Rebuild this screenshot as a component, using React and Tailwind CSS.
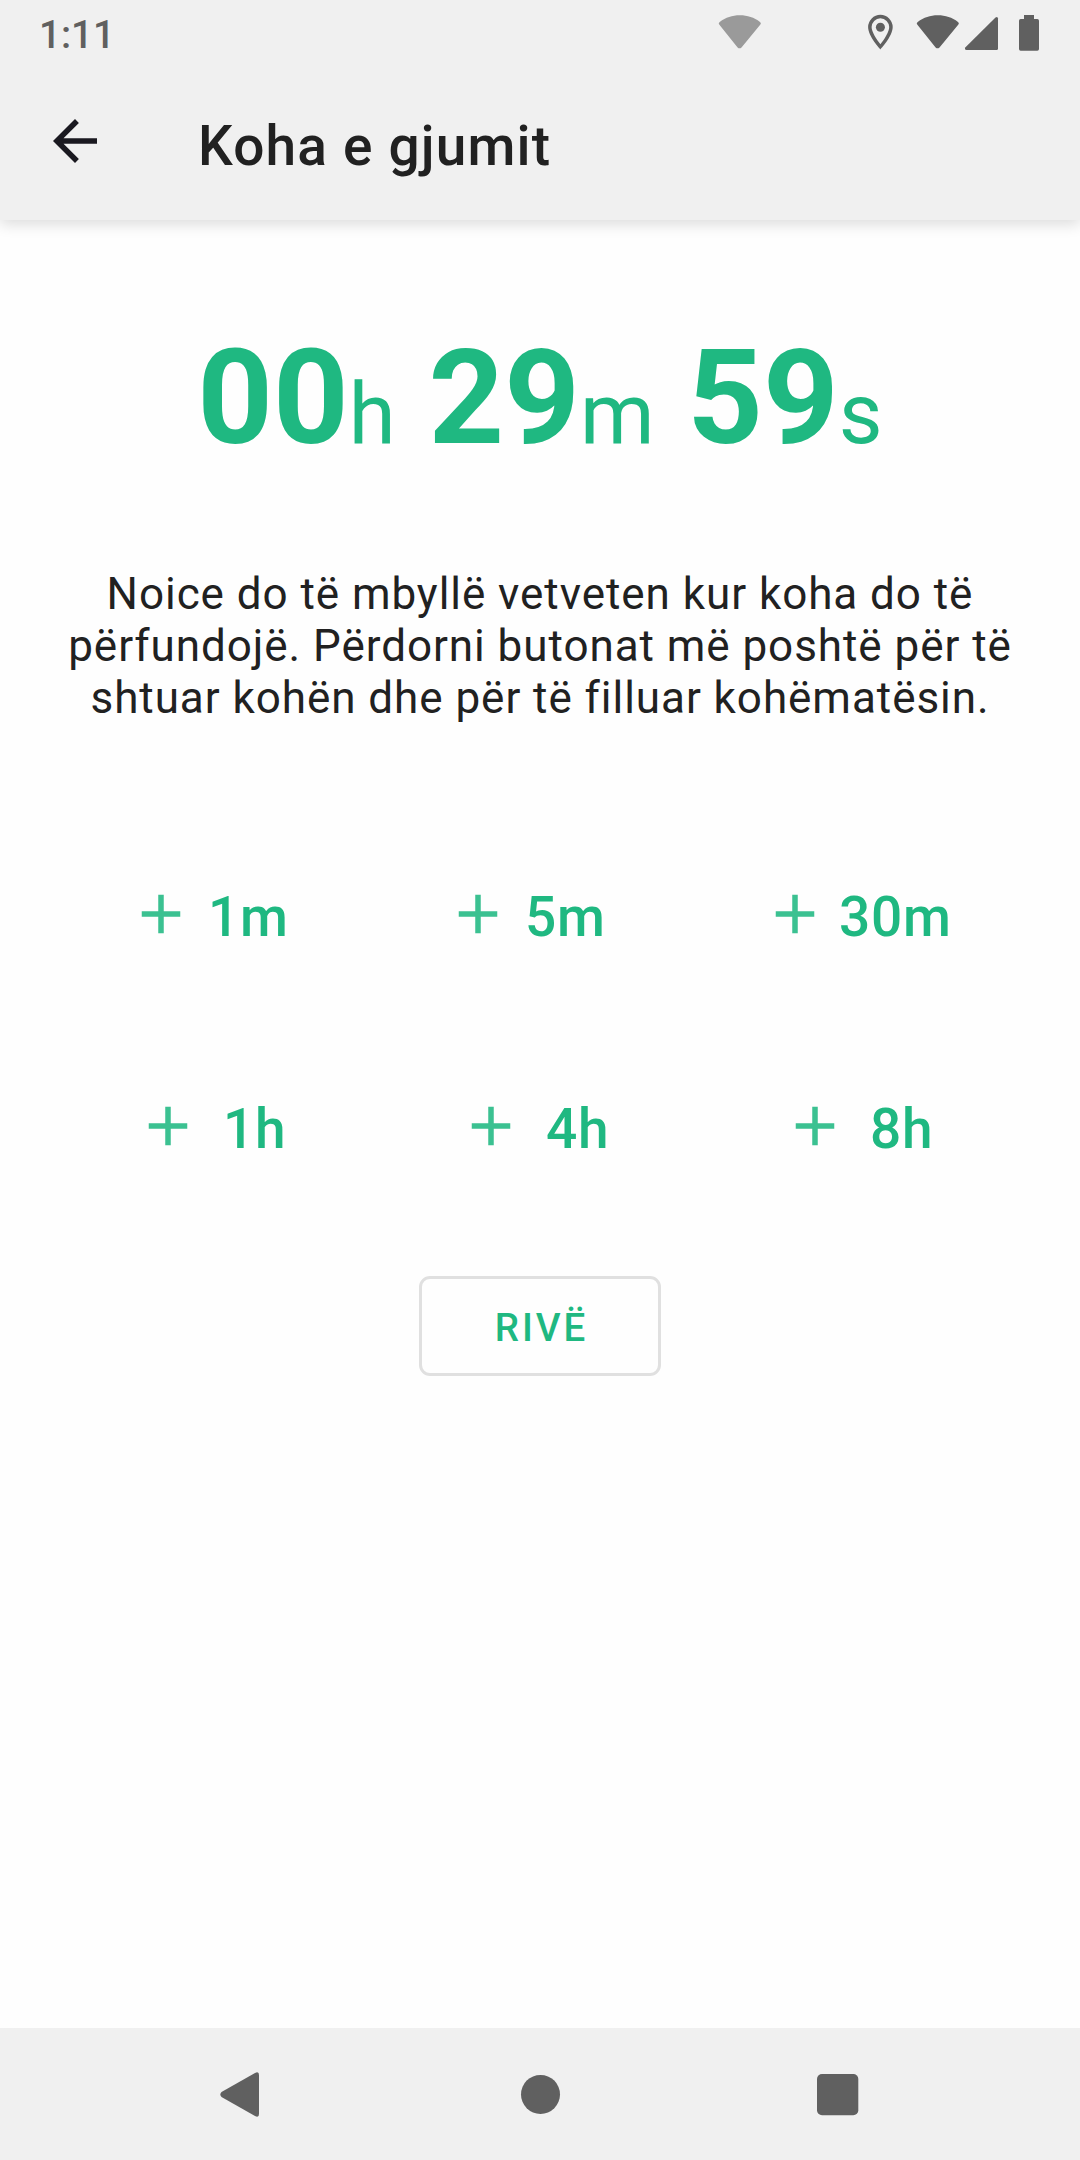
const rows = [
  {
    className: 'mt-[157px] pl-[128px]',
    items: [
      { label: '1m', cell: 'w-[317px]', gap: 'ml-[14px]' },
      { label: '5m', cell: 'w-[317px]', gap: 'ml-[14px]' },
      { label: '30m', cell: 'w-[317px]', gap: 'ml-[11px]' },
    ],
  },
  {
    className: 'mt-[146px] pl-[135px]',
    items: [
      { label: '1h', cell: 'w-[323px]', gap: 'ml-[22px]' },
      { label: '4h', cell: 'w-[324px]', gap: 'ml-[22px]' },
      { label: '8h', cell: 'w-[297px]', gap: 'ml-[22px]' },
    ],
  },
];

function AddButton({ label, cell, gap }) {
  return (
    <div className={cell}>
      <button className="flex h-[66px] items-start text-[#1fb881]">
        <svg className="size-[66px] opacity-[0.87]" viewBox="0 0 24 24" fill="currentColor">
          <path d="M19 13h-6v6h-2v-6H5v-2h6V5h2v6h6v2Z" />
        </svg>
        <span className={`${gap} mt-[3px] text-[55px] leading-[66px] font-medium tracking-[0.7px]`}>{label}</span>
      </button>
    </div>
  );
}

function TimePart({ value, unit }) {
  return (
    <>
      <span className="text-[132px] font-bold">{value}</span>
      <span className="text-[85px] font-normal">{unit}</span>
    </>
  );
}

function StatusIcons() {
  return (
    <svg className="h-[66px] w-[380px]" viewBox="700 0 380 66" fill="#606060">
      <path opacity=".6" d="M719.200 24.600Q718 23 719.700 21.900C726 17.500 732 15.300 739.800 15.300S754 17.500 760 21.900Q761.600 23 760.400 24.600L741.500 47.400Q739.500 49.300 737.600 47.400Z" />
      <path d="M917.200 24.600Q916 23 917.700 21.900C924 17.500 930 15.300 937.800 15.300S952 17.500 958 21.900Q959.600 23 958.400 24.600L939.500 47.400Q937.500 49.300 935.600 47.400Z" />
      <path d="M998 18.500V48.500Q998 50 996.500 50H966.500Q964 49.500 965.500 47.200L995.500 17.600Q997.600 16 998 18.500Z" />
      <path d="M1024 15h10v4h3.300q1.700 0 1.700 1.700v28.300q0 1.700-1.700 1.700h-16.600q-1.700 0-1.700-1.700V20.700q0-1.700 1.700-1.700h3.300Z" />
      <path fillRule="evenodd" d="M880.400 14.800a12.300 12.300 0 0 0-12.300 12.300c0 9.200 12.300 22.400 12.300 22.400s12.300-13.200 12.300-22.400a12.300 12.300 0 0 0-12.300-12.300Zm0 3.500a8.800 8.800 0 0 1 8.800 8.800c0 4.900-4.900 12.300-8.800 17.200-3.800-4.800-8.800-12.300-8.800-17.200a8.800 8.800 0 0 1 8.800-8.800Z" />
      <circle cx="880.400" cy="27.300" r="4.500" />
    </svg>
  );
}

export default function App() {
  return (
    <div className="flex h-[2160px] w-[1080px] flex-col overflow-hidden bg-[#fefefe] font-['Roboto',sans-serif] text-[#212121]">
      <header className="h-[220px] shrink-0 bg-[#f0f0f0] shadow-[0_4px_14px_rgba(0,0,0,0.14)]">
        <div className="flex h-[66px] justify-between">
          <span className="pt-[12px] pl-[39px] text-[38.5px] leading-[46px] font-medium text-[#606060]">1:11</span>
          <StatusIcons />
        </div>
        <div className="flex">
          <svg className="mt-[42px] ml-[42px] size-[66px]" viewBox="0 0 24 24" fill="#1a1920">
            <path d="M20 11H7.830l5.590-5.590L12 4l-8 8 8 8 1.410-1.410L7.830 13H20Z" />
          </svg>
          <h1 className="mt-[47px] ml-[90px] text-[55px] leading-[66px] font-medium tracking-[1.17px]">Koha e gjumit</h1>
        </div>
      </header>
      <main className="flex h-[1808px] shrink-0 flex-col">
        <div className="mt-[101px] h-[155px] text-center text-[132px] leading-[155px] font-bold whitespace-nowrap text-[#1fb881]">
          <TimePart value="00" unit="h" /> <TimePart value="29" unit="m" /> <TimePart value="59" unit="s" />
        </div>
        <p className="mt-[92px] text-center text-[44px] leading-[52px] tracking-[0.95px]">
          Noice do të mbyllë vetveten kur koha do të<br />përfundojë. Përdorni butonat më poshtë për të<br />shtuar kohën dhe për të filluar kohëmatësin.
        </p>
        {rows.map((row) => (
          <div key={row.className} className={`flex ${row.className}`}>
            {row.items.map((item) => <AddButton key={item.label} {...item} />)}
          </div>
        ))}
        <button className="mt-[117px] ml-[419px] flex h-[100px] w-[242px] justify-center rounded-[11px] border-[3px] border-[#e0e0e0] pt-[26px] pl-[3px] text-[38.5px] leading-[46px] font-medium tracking-[2.9px] text-[#1fb881]">RIVË</button>
      </main>
      <nav className="flex h-[132px] shrink-0 bg-[#f0f0f0]">
        <svg className="h-[132px] w-[1080px]" viewBox="0 2028 1080 132" fill="#606060">
          <path d="M221.500 2092L255 2073Q259 2071 259 2075V2114Q259 2118 255 2116L221.500 2097Q219.200 2094.500 221.500 2092Z" />
          <circle cx="540.500" cy="2094.400" r="19.500" />
          <rect x="817" y="2074" width="41.300" height="41.300" rx="5" />
        </svg>
      </nav>
    </div>
  );
}
